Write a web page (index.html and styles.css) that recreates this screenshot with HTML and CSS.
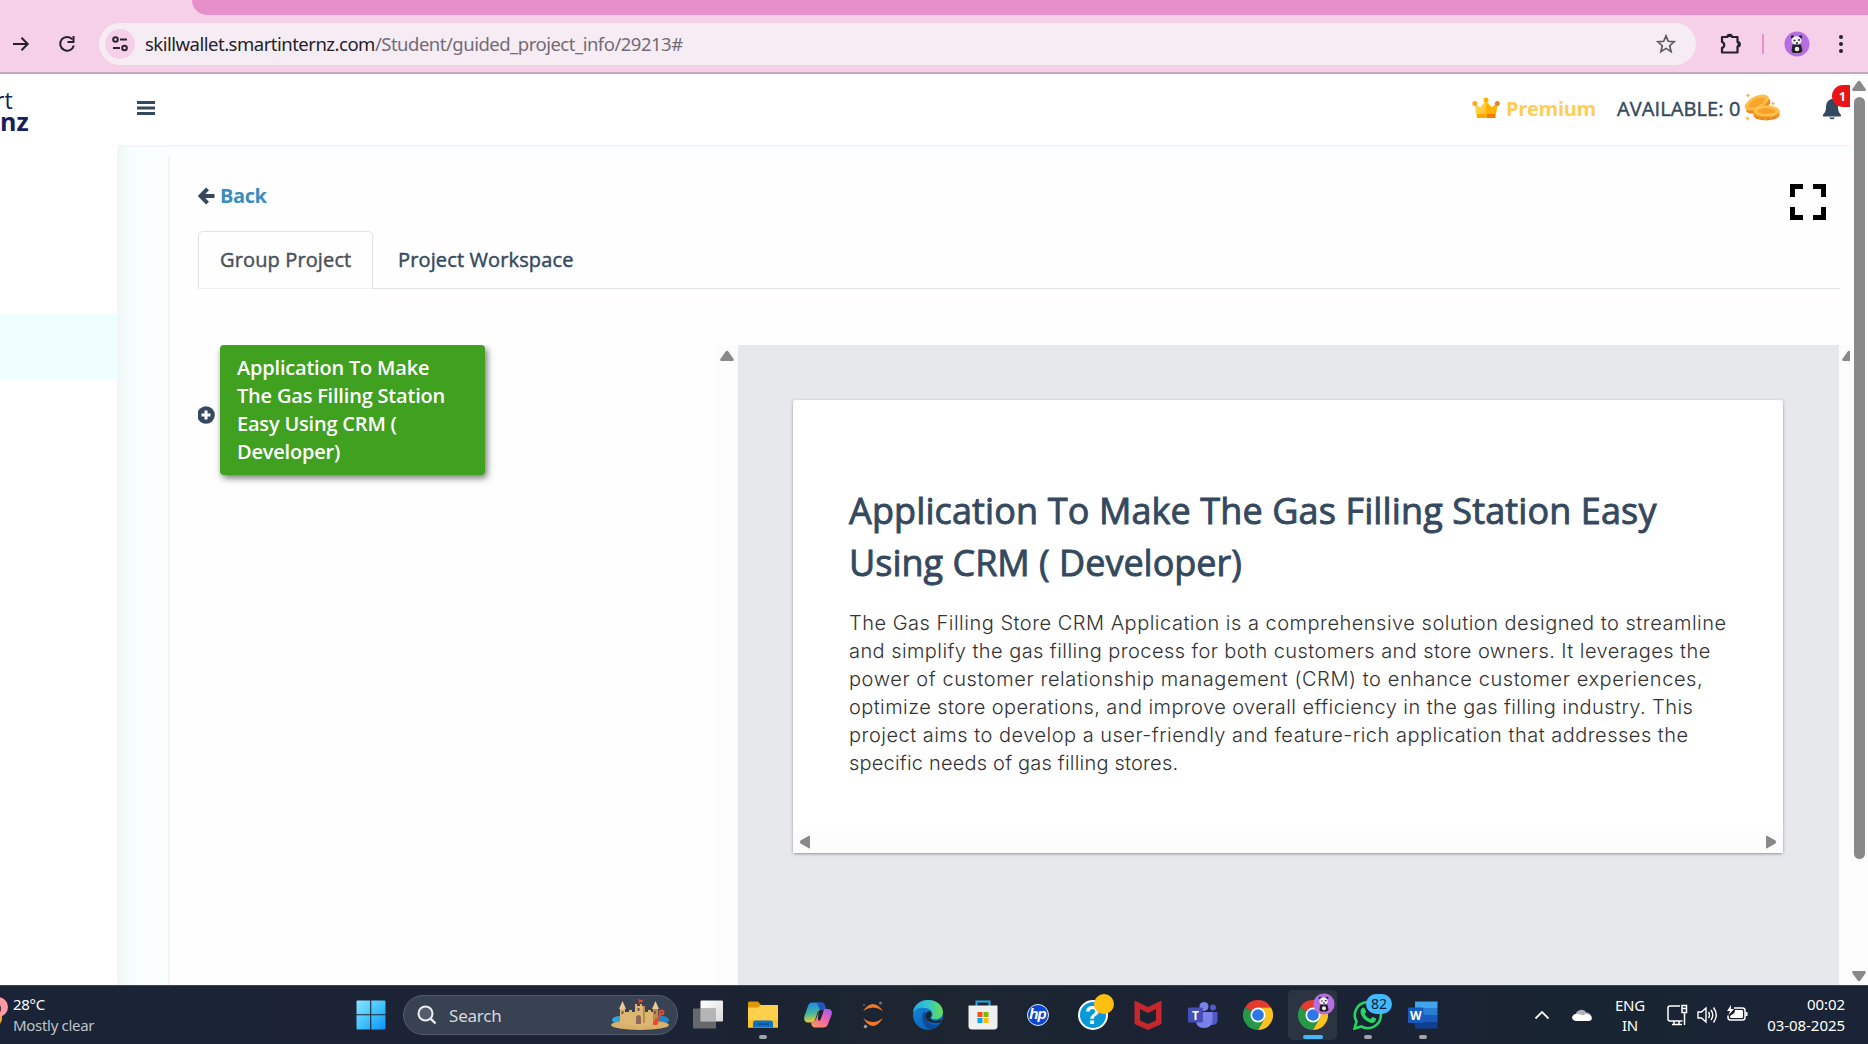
FILE: index.html
```html
<!DOCTYPE html>
<html lang="en">
<head>
<meta charset="utf-8">
<title>SkillWallet - Guided Project</title>
<link rel="stylesheet" href="styles.css">
</head>
<body>
<div class="screen">
  <header class="browser">
    <div class="tabstrip"><div class="tabstrip-fill"></div></div>
    <div class="toolbar">
      <svg class="nav-forward" width="18" height="18" viewBox="0 0 18 18"><path d="M1 9H15M9.5 2.8L15.7 9L9.500 15.200" fill="none" stroke="#25212a" stroke-width="2"/></svg>
      <svg class="nav-reload" width="18" height="18" viewBox="0 0 18 18"><path d="M14.500 4.500A6.900 6.900 0 1 0 15.800 10.500" fill="none" stroke="#25212a" stroke-width="2"/><path d="M15.500 1V7H9.500" fill="none" stroke="#25212a" stroke-width="2"/></svg>
      <div class="omnibox">
        <div class="site-info"><svg width="18" height="18" viewBox="0 0 18 18"><g fill="none" stroke="#2b2430" stroke-width="2"><circle cx="4.500" cy="4.500" r="2.300"/><path d="M9 4.500H16M2 13H9"/><circle cx="13.500" cy="13" r="2.300"/></g></svg></div>
        <div class="url">skillwallet.smartinternz.com<span class="url-path">/Student/guided_project_info/29213#</span></div>
        <svg class="star" width="20" height="20" viewBox="0 0 20 20"><path d="M10 1.800L12.300 7.300L18.200 7.800L13.700 11.700L15.100 17.600L10 14.400L4.900 17.600L6.300 11.700L1.800 7.800L7.700 7.300Z" fill="none" stroke="#5e5a62" stroke-width="1.700"/></svg>
      </div>
      <svg class="extensions" width="22" height="22" viewBox="0 0 22 22"><path d="M2 4H7.500A2.200 2.200 0 0 1 11.900 4H17.500V9A2.300 2.300 0 0 1 17.500 13.600V19.500H2V14.800A3 3 0 0 0 2 9Z" fill="none" stroke="#25212a" stroke-width="2.200" stroke-linejoin="round"/><path d="M7.500 4a2.200 2.200 0 0 1 4.400 0zM17.500 9a2.300 2.300 0 0 1 0 4.600z" fill="#25212a"/></svg>
      <div class="toolbar-rule"></div>
      <svg class="avatar" width="26" height="26" viewBox="0 0 26 26"><use href="#panda"/></svg>
      <svg class="kebab" width="6" height="20" viewBox="0 0 6 20"><g fill="#25212a"><circle cx="3" cy="3" r="2"/><circle cx="3" cy="10" r="2"/><circle cx="3" cy="17" r="2"/></g></svg>
    </div>
  </header>

  <div class="page">
    <aside class="sidebar">
      <div class="logo"><span class="logo-top">rt</span><span class="logo-bottom">nz</span></div>
      <div class="menu-active"></div>
    </aside>
    <div class="main">
      <div class="topbar">
        <svg class="burger" width="18" height="14" viewBox="0 0 18 14"><path d="M0 1.500H18M0 7H18M0 12.500H18" stroke="#34495e" stroke-width="3"/></svg>
        <svg class="crown" width="28" height="22" viewBox="0 0 28 22"><defs><linearGradient id="gold" x2="1" y2="1"><stop offset="0" stop-color="#ffe06a"/><stop offset="1" stop-color="#ffb300"/></linearGradient></defs><path d="M2.500 7L8.500 10L14 3L19.500 10L25.500 7L23 21H5Z" fill="url(#gold)"/><path d="M14 5L19.500 10.500L25.500 7L24 17H14Z" fill="#ffb000"/><path d="M5 17H23.300V21H5Z" fill="#ffa800"/><path d="M15 17H23.300V21H15Z" fill="#f57c00"/><circle cx="14" cy="3" r="2.500" fill="#ffb300"/><circle cx="2.800" cy="6.500" r="2.500" fill="#ffa726"/><circle cx="25.300" cy="6.500" r="2.500" fill="#ef7d22"/></svg>
        <span class="premium">Premium</span>
        <span class="available">AVAILABLE: 0</span>
        <svg class="coins" width="36" height="28" viewBox="0 0 36 28"><g transform="rotate(-25 13 10)"><ellipse cx="13" cy="13" rx="13" ry="6.300" fill="#e88b24"/><ellipse cx="13" cy="9.500" rx="13" ry="6.300" fill="#ffbd45"/><ellipse cx="13" cy="9.500" rx="9" ry="3.500" fill="#f8a52d"/></g><path d="M9.500 18V22.500C11 29 33 29 35.500 22.500V17.500Z" fill="#f09325"/><ellipse cx="22.500" cy="18" rx="13" ry="5.500" fill="#ffc34c"/><ellipse cx="22.500" cy="18" rx="9" ry="3" fill="#f8a12c"/><path d="M13 24v2M18 25v2M24 25v2M30 24v2" stroke="#c96d20"/><path d="M4 0l.8 1.700 1.700.8-1.700.8L4 5l-.8-1.700L1.500 2.500l1.700-.8zM3.500 23l.8 1.700 1.700.8-1.700.8-.8 1.700-.8-1.700L1 25.500l1.700-.8zM29 8l.8 1.700 1.700.8-1.700.8L29 13l-.8-1.700-1.700-.8 1.700-.8z" fill="#ffb84b"/></svg>
        <div class="bell">
          <svg width="20" height="22" viewBox="0 0 20 22"><path d="M10 1C6 1.500 4 5 4 9C4 13.500 2.500 15 .8 17Q.5 18.500 2 18.500H18Q19.500 18.500 19 17C17.500 15 16 13.500 16 9C16 5 14 1.500 10 1ZM7.200 19.500a2.900 2.500 0 0 0 5.600 0z" fill="#34495e"/></svg>
          <span class="badge">1</span>
        </div>
      </div>
      <div class="workspace">
        <section class="panel">
          <div class="panel-head">
            <div class="back"><svg width="17" height="18" viewBox="0 0 17 18"><path d="M9.500 1.800L2.500 9L9.500 16.200M3 9H16.500" fill="none" stroke="#34495e" stroke-width="4"/></svg><a class="back-link">Back</a></div>
            <svg class="fullscreen" width="36" height="36" viewBox="0 0 36 36"><path d="M2.500 13V2.500H13M23 2.500H33.500V13M33.500 23V33.500H23M13 33.500H2.500V23" fill="none" stroke="#000" stroke-width="5"/></svg>
          </div>
          <nav class="tabs"><div class="tab tab-on"><span>Group Project</span></div><div class="tab"><span>Project Workspace</span></div></nav>
          <div class="columns">
            <div class="tree">
              <svg class="plus" width="18" height="18" viewBox="0 0 18 18"><circle cx="9" cy="9" r="8.800" fill="#34495e"/><path d="M9 4.500V13.500M4.500 9H13.500" stroke="#fff" stroke-width="3"/></svg>
              <div class="node">Application To Make<br>The Gas Filling Station<br>Easy Using CRM (<br>Developer)</div>
            </div>
            <div class="tree-scroll"><svg width="14" height="12" viewBox="0 0 14 12"><use href="#tri"/></svg></div>
            <div class="stage">
              <article class="card">
                <div class="card-body">
                  <h1>Application To Make The Gas Filling Station Easy<br><span class="title-end">Using CRM ( Developer)</span></h1>
                  <p><span class="l1">The Gas Filling Store CRM Application is a comprehensive solution designed to streamline</span><br><span class="l2">and simplify the gas filling process for both customers and store owners. It leverages the</span><br><span class="l3">power of customer relationship management (CRM) to enhance customer experiences,</span><br><span class="l4">optimize store operations, and improve overall efficiency in the gas filling industry. This</span><br><span class="l5">project aims to develop a user-friendly and feature-rich application that addresses the</span><br><span class="l6">specific needs of gas filling stores.</span></p>
                </div>
                <div class="card-scroll"><svg width="12" height="14" viewBox="0 0 12 14"><path d="M11 1V13Q11 14 9.500 13L1.500 8.500Q0 7 1.500 5.500L9.500 1Q11 0 11 1Z" fill="#898989"/></svg><svg width="12" height="14" viewBox="0 0 12 14"><path d="M1 1V13Q1 14 2.500 13L10.500 8.500Q12 7 10.500 5.500L2.500 1Q1 0 1 1Z" fill="#898989"/></svg></div>
              </article>
            </div>
            <div class="stage-scroll"><svg width="14" height="12" viewBox="0 0 14 12"><use href="#tri"/></svg></div>
          </div>
        </section>
      </div>
    </div>
    <div class="page-scroll">
      <svg width="14" height="12" viewBox="0 0 14 12"><use href="#tri"/></svg>
      <div class="thumb"></div>
      <svg class="down" width="14" height="12" viewBox="0 0 14 12"><use href="#tri"/></svg>
    </div>
  </div>

  <footer class="taskbar">
    <div class="weather"><svg class="weather-icon" width="9" height="34" viewBox="0 0 9 34"><path d="M0 16H2V24L0 28Z" fill="#f5a623"/><circle cx="-2" cy="11" r="10" fill="#ff99a4"/><path d="M0 9L1 11V15L0 16Z" fill="#57363c"/></svg><div class="weather-text"><span>28°C</span><span class="muted">Mostly clear</span></div></div>
    <svg class="windows" width="30" height="30" viewBox="0 0 30 30"><defs><linearGradient id="win" x2="1" y2="1"><stop offset="0" stop-color="#8be3ff"/><stop offset=".5" stop-color="#43c4fb"/><stop offset="1" stop-color="#0c8fff"/></linearGradient></defs><path d="M.5 1.500Q.5.500 1.500.500H14.200V14.200H.500ZM15.300.500H28.500Q29.500.500 29.500 1.500V14.200H15.300ZM.5 15.300H14.200V29.500H1.500Q.5 29.500.5 28.500ZM15.300 15.300H29.500V28.500Q29.500 29.500 28.500 29.500H15.300Z" fill="url(#win)"/></svg>
    <div class="search">
      <svg width="20" height="20" viewBox="0 0 20 20"><circle cx="8.500" cy="8.500" r="7" fill="#545d6c" stroke="#eceef1" stroke-width="2"/><path d="M13.600 13.600L18.500 18.500" stroke="#eceef1" stroke-width="2.400"/></svg>
      <span class="search-label">Search</span>
      <svg class="castle" width="60" height="32" viewBox="0 0 60 32"><ellipse cx="10" cy="21" rx="8" ry="4" fill="#2ba7dc"/><ellipse cx="52" cy="21" rx="7" ry="4" fill="#2385c5"/><ellipse cx="30" cy="26" rx="29" ry="5" fill="#d8b06c"/><path d="M10 10H15V13H19V11H22V13H25V5H27V7H30V5H32V7H35V13H38V11H41V13H43V10H48V25Q30 29 10 25Z" fill="#dcb673"/><path d="M9 10L12.500 2L16 10ZM42 10L45.500 2L49 10Z" fill="#e9cb92"/><path d="M43 10H48V25H43ZM33 7H35V24H33Z" fill="#b98c4e"/><path d="M26 25V18Q28.500 14 31 18V25Z" fill="#8c6757"/><path d="M28.500 9V12M12.500 12V15M45 12V15" stroke="#745a54" stroke-width="2"/><path d="M29 6V0" stroke="#a33"/><path d="M29 0L34 2L29 4Z" fill="#ef4936"/><path d="M46 23L51 14" stroke="#e54a35" stroke-width="2"/><circle cx="51.500" cy="13.500" r="2" fill="none" stroke="#e54a35" stroke-width="2"/><path d="M43 23L46 19L49 22L47 26H43Z" fill="#e54a35"/></svg>
    </div>
    <div class="apps">
      <div class="app"><svg width="30" height="30" viewBox="0 0 30 30"><defs><linearGradient id="tv" x2="1" y2="1"><stop stop-color="#fff"/><stop offset="1" stop-color="#d9d9db"/></linearGradient></defs><rect x="7.500" y=".5" width="22.500" height="21" rx="1" fill="url(#tv)"/><rect y="8.500" width="23" height="20" rx="1" fill="#777" opacity=".82"/><path d="M7.500 8.500H23V21.500H7.500Z" fill="#b4b5b6"/></svg></div>
      <div class="app"><svg width="30" height="30" viewBox="0 0 30 30"><path d="M0 3Q0 1.500 1.500 1.500H10L13 5H20V12H0Z" fill="#dc9900"/><path d="M0 7.500H10L13 5H30V27.500H0Z" fill="#ffd04b"/><path d="M0 20H30V27.500H0Z" fill="#fcc22f"/><path d="M5 27.500V23Q5 20.500 7.500 20.500H22.500Q25 20.500 25 23V27.500Z" fill="#0b73c6"/><path d="M9 24H21" stroke="#063f75" stroke-width="1.200"/></svg><i class="run"></i></div>
      <div class="app"><svg width="30" height="30" viewBox="0 0 30 30"><defs><linearGradient id="cpa" x2=".2" y2="1"><stop offset=".1" stop-color="#1d8ae8"/><stop offset=".6" stop-color="#48b69b"/><stop offset="1" stop-color="#f4cb2e"/></linearGradient><linearGradient id="cpb" x1=".8" x2=".2" y2="1"><stop stop-color="#a659eb"/><stop offset=".5" stop-color="#f265aa"/><stop offset="1" stop-color="#ff935b"/></linearGradient></defs><path d="M9 2.500H18Q21 2.500 22 6L23 10H18Q15 10 14 14L12 20Q11 22.500 8 22.500H5Q0 22 1.500 16L5 6Q6 2.500 9 2.500Z" fill="url(#cpa)"/><path d="M14 2.500H18Q21 2.500 22 6L23 10H17Z" fill="#2453c8"/><path d="M21 9H25Q30 9 28.500 15L25 24Q24 27.500 20 27.500H12Q9 27.500 8 23L10 22Q12 22 13 19L16 11Q14 20 16 21Q18 21 21 9Z" fill="url(#cpb)"/></svg></div>
      <div class="app"><svg width="30" height="30" viewBox="0 0 30 30"><path d="M5 11Q15-3 25 11Q15 4 5 11ZM5 18Q15 34 25 18Q15 26 5 18Z" fill="#f37726"/><circle cx="22.500" cy="3" r="1.500" fill="#777"/><circle cx="6" cy="5" r="1" fill="#666"/><circle cx="7.500" cy="26.500" r="1.800" fill="#999"/></svg></div>
      <div class="app"><svg width="30" height="30" viewBox="0 0 30 30"><defs><linearGradient id="edge"><stop stop-color="#27a9e3"/><stop offset=".5" stop-color="#35c5cc"/><stop offset="1" stop-color="#67df4c"/></linearGradient><linearGradient id="edgeb" x2=".6" y2="1"><stop stop-color="#168cda"/><stop offset="1" stop-color="#0862b8"/></linearGradient></defs><circle cx="15" cy="15" r="15" fill="url(#edgeb)"/><path d="M0 13C1-4 29-4 30 12C30 19 22 21 18 18C22 13 17 8 12 8C6 7 2 9 0 13Z" fill="url(#edge)"/><path d="M12 11C8 14 8 23 14 28Q20 32 27 24C22 27 14 24 13 16Z" fill="#104a94"/><path d="M17 11C20 14 18 16 17 18C19 22 25 21 28.500 19.500L27.500 22.500C20 24 12 22 12.500 15Q13 11.500 17 11Z" fill="#1a2533"/></svg></div>
      <div class="app"><svg width="30" height="30" viewBox="0 0 30 30"><path d="M8.500 6V1.500H21.500V6" fill="none" stroke="#24a9e5" stroke-width="2"/><path d="M.5 5.500H29.500V26Q29.500 29.500 26 29.500H4Q.5 29.500 .5 26Z" fill="#f0f0f1"/><path d="M9.500 12H14.500V17H9.500Z" fill="#f25022"/><path d="M15.500 12H20.500V17H15.500Z" fill="#7fba00"/><path d="M9.500 18H14.500V23H9.500Z" fill="#00a4ef"/><path d="M15.500 18H20.500V23H15.500Z" fill="#ffb900"/></svg></div>
      <div class="app"><div class="hp">hp</div></div>
      <div class="app"><div class="help">?</div><i class="help-dot"></i></div>
      <div class="app"><svg width="30" height="30" viewBox="0 0 30 30"><path d="M1.500.500L15 7L28.500.500V24L15 30L1.500 24ZM7 9V20.500L15 24L23 20.500V9L15 13Z" fill="#c5272d" fill-rule="evenodd"/></svg></div>
      <div class="app"><svg width="30" height="30" viewBox="0 0 30 30"><circle cx="16" cy="6.500" r="4.500" fill="#7b83eb"/><circle cx="25" cy="7.500" r="3" fill="#5059c9"/><path d="M20 12H29.500V20Q29.500 25 24 25H20Z" fill="#5059c9"/><path d="M8 12H24.500V20Q24 28 16 28T8 20Z" fill="#7b83eb"/><rect y="7.500" width="15" height="15" rx="1.500" fill="#464eb8"/><text class="office-letter" x="7.500" y="19.500" font-size="12">T</text></svg></div>
      <div class="app"><svg width="30" height="30" viewBox="0 0 30 30"><use href="#chrome"/></svg></div>
      <div class="app app-on"><svg width="30" height="30" viewBox="0 0 30 30"><use href="#chrome"/></svg><svg class="mini-avatar" width="22" height="22" viewBox="0 0 26 26"><use href="#panda"/></svg><i class="run"></i></div>
      <div class="app"><svg width="30" height="30" viewBox="0 0 30 30"><path d="M1.500 28.500L3.500 21.500A13 13 0 1 1 8.500 26.500Z" fill="#18242f" stroke="#25d366" stroke-width="2.600"/><path d="M9 8Q11 6.500 12 9L13 11.500Q13 13 11.500 14Q14 18 17.500 19L19.500 17Q23.500 18 23 19.500Q22 23 19 23C13 22 8 17 7.500 12Q7.500 9.500 9 8Z" fill="#25d366"/></svg><b class="count">82</b><i class="run"></i></div>
      <div class="app"><svg width="30" height="30" viewBox="0 0 30 30"><path d="M7 1.500H29.500V8H7Z" fill="#41a5ee"/><path d="M7 8H29.500V15H7Z" fill="#2b7cd3"/><path d="M7 15H29.500V22H7Z" fill="#185abd"/><path d="M7 22H29.500V28.500H7Z" fill="#103f91"/><rect x="0" y="7.500" width="15.500" height="15.500" rx="1.300" fill="#185abd"/><text class="office-letter" x="7.700" y="19.700" font-size="12">W</text></svg><i class="run"></i></div>
    </div>
    <div class="tray">
      <svg width="16" height="10" viewBox="0 0 16 10"><path d="M1.500 8.500L8 2L14.500 8.500" fill="none" stroke="#fff" stroke-width="1.800"/></svg>
      <svg class="cloud" width="20" height="14" viewBox="0 0 20 14"><path d="M3.500 7A6 6 0 0 1 14.500 4.500A5 5 0 0 1 19.500 10H3Z" fill="#aeb3bc"/><path d="M0 9Q2 4.500 7 6L11 7.500Q15 4.500 19 8Q21.500 12.500 17 13H4Q0 12.500 0 9Z" fill="#fff"/></svg>
      <div class="lang"><span>ENG</span><span>IN</span></div>
      <svg class="net" width="21" height="22" viewBox="0 0 21 22"><g fill="none" stroke="#fff" stroke-width="1.500"><path d="M13 2H3Q1 2 1 4V15Q1 17 3 17H15.500M7 17V20M12 17V20M5 20.500H15"/><rect x="15" y="1.500" width="4.500" height="7"/><path d="M17.500 9V21M15 4.500H20"/></g></svg>
      <svg class="vol" width="21" height="18" viewBox="0 0 21 18"><g fill="none" stroke="#fff" stroke-width="1.400"><path d="M1 6V12H4.500L9 16V2L4.500 6Z"/><path d="M11.500 6Q13.500 9 11.500 12M14 4Q17.500 9 14 14M16.500 1.500Q22 9 16.500 16.500"/></g></svg>
      <svg class="bat" width="21" height="18" viewBox="0 0 21 18"><path d="M7 3H15.500Q18 3 18 5.500V12.500Q18 15 15.500 15H3.500Q1 15 1 12.500V10.500" fill="none" stroke="#fff" stroke-width="1.500"/><path d="M8 5H15Q16 5 16 6.500V11.500Q16 13 15 13H4Q3 13 3 11L7.500 8ZM18.500 7H20.500V11H18.500ZM4 0L0 6H3L1.500 10L7 4H4Z" fill="#fff"/></svg>
      <div class="clock"><span class="time">00:02</span><span class="date">03-08-2025</span></div>
    </div>
  </footer>
</div>

<svg class="symbols" width="0" height="0">
  <symbol id="tri" viewBox="0 0 14 12"><path d="M1 11Q-.5 10.500.7 8.500L5.500 1.800Q7-.2 8.500 1.800L13.300 8.500Q14.500 10.500 13 11Z" fill="#898989"/></symbol>
  <symbol id="panda" viewBox="0 0 26 26"><circle cx="13" cy="13" r="12.500" fill="#b56ee0"/><circle cx="8.500" cy="6" r="1.700" fill="#222"/><circle cx="16.500" cy="6" r="1.700" fill="#222"/><ellipse cx="12.500" cy="9.500" rx="5" ry="4.300" fill="#f2f0f2"/><path d="M8.500 13.500H17L18.500 20L16 22H9L7.500 20Z" fill="#222"/><ellipse cx="13" cy="18" rx="2.300" ry="2.300" fill="#eee"/><path d="M9.500 9.500H11.500M14 9H16M12 12H14" stroke="#222" stroke-width="1.300"/></symbol>
  <symbol id="chrome" viewBox="0 0 30 30"><path d="M15 15L2 7.500A15 15 0 0 1 28 7.500H15Z" fill="#e33b2e"/><path d="M15 15L2 7.500A15 15 0 0 0 15 30L21.500 18.800Z" fill="#27984a"/><path d="M15 7.500H28A15 15 0 0 1 15 30L21.500 18.800Z" fill="#fcc31e"/><circle cx="15" cy="15" r="7.500" fill="#fff"/><circle cx="15" cy="15" r="5.800" fill="#2b76e8"/></symbol>
</svg>
</body>
</html>
```
FILE: styles.css
```css
* { box-sizing: border-box; }
body { margin: 0; font-family: "Open Sans", "Noto Sans", sans-serif; overflow: hidden; }
svg { display: block; flex: none; }
.symbols { position: absolute; }
.screen { width: 1868px; height: 1044px; display: grid; grid-template-rows: 74px 911px 59px; overflow: hidden; background: #fff; }

/* browser chrome */
.browser { background: #f5d0e8; border-bottom: 2px solid #c4a8bd; }
.tabstrip { height: 15px; padding-left: 192px; background: linear-gradient(90deg, #f5d0e8 50%, #e78fca 50%); }
.tabstrip-fill { height: 15px; background: #e78fca; border-bottom-left-radius: 15px; }
.toolbar { height: 57px; display: flex; align-items: center; padding: 0 0 0 12px; background: #f5d0e8; border-top-right-radius: 12px; }
.nav-reload { margin-left: 28px; }
.omnibox { width: 1597px; height: 42px; margin-left: 23px; border-radius: 21px; background: #f5edf3; display: flex; align-items: center; padding-left: 6px; }
.site-info { width: 30px; height: 30px; border-radius: 15px; background: #f5d0e8; display: grid; place-items: center; }
.url { margin-left: 10px; font: 18.500px "Noto Sans", sans-serif; letter-spacing: -.5px; color: #25212a; white-space: nowrap; }
.url-path { color: #746b75; }
.star { margin: 0 20px 0 auto; }
.extensions { margin-left: 24px; }
.toolbar-rule { width: 2px; height: 20px; margin-left: 20px; background: #e78fca; }
.avatar { margin-left: 20px; }
.kebab { margin-left: 28px; }

/* site frame */
.page { display: grid; grid-template-columns: 117px 1733px 18px; min-height: 0; overflow: hidden; }
.sidebar { overflow: hidden; }
.logo { height: 240px; display: flex; flex-direction: column; align-items: flex-start; padding-top: 16px; color: #16215b; line-height: 21px; }
.logo-top { font-size: 23px; margin-left: -5px; }
.logo-bottom { font-size: 25px; font-weight: 700; }
.menu-active { height: 65px; background: #effeff; }
.main { display: grid; grid-template-rows: 71px 840px; min-width: 0; }
.topbar { display: flex; align-items: center; padding: 0 0 2px 20px; color: #34495e; font-size: 20px; font-weight: 400; }
.burger { margin: -2px auto 0 0; }
.crown { margin: -2px 6px 0 0; }
.premium { width: 90px; color: #ffcd55; font-weight: 700; white-space: nowrap; letter-spacing: -.3px; }
.available { width: 124px; margin-left: 21px; white-space: nowrap; letter-spacing: .1px; -webkit-text-stroke: .45px #34495e; }
.coins { margin: -3px 0 0 3px; }
.bell { position: relative; width: 28px; height: 44px; margin-left: 42px; padding-top: 11px; }
.badge { position: absolute; left: 10px; top: -2px; width: 18px; height: 22px; padding-left: 7px; border-radius: 11px 0 0 11px; background: #e81417; color: #fff; font-size: 12px; font-weight: 700; line-height: 23px; }
.workspace { padding: 9px 0 0 51px; background: linear-gradient(90deg, #f0f5f7 0, #f8fdfe 14px, #fafeff 50px); border-top: 2px solid #f2f6f8; }
.panel { height: 829px; padding-left: 28px; background: #fefefe; border-left: 2px solid #f0f4f6; }
.panel-head { height: 75px; display: flex; justify-content: space-between; padding: 28px 24px 0 0; }
.back { display: flex; height: 22px; align-items: center; gap: 5px; }
.back svg { margin-top: 2px; }
.back-link { color: #3c8dbc; font-size: 20px; font-weight: 700; letter-spacing: -.4px; }
.tabs { display: flex; width: 1642px; height: 58px; border-bottom: 1px solid #dee2e6; color: #34495e; font-size: 20px; letter-spacing: .13px; -webkit-text-stroke: .45px currentColor; }
.tab { height: 58px; padding: 0 24px; line-height: 56px; white-space: nowrap; border: 1px solid transparent; }
.tab-on { width: 175px; padding: 0 21px; color: #495057; background: #fefefe; border-color: #dee2e6 #dee2e6 #f0f0f0; border-radius: 5px 5px 0 0; }

/* project tree and detail stage */
.columns { display: grid; grid-template-columns: 517px 23px 1101px 11px; height: 640px; margin-top: 56px; overflow: hidden; }
.tree { display: flex; align-items: flex-start; overflow: hidden; margin-left: -1px; padding-left: 1px; }
.plus { margin: 61px 5px 0 -1px; }
.node { width: 265px; height: 130px; padding: 9px 17px; border-radius: 4px; background: #40a020; color: #fff; font-size: 20px; font-weight: 600; line-height: 28px; letter-spacing: -.2px; white-space: nowrap; box-shadow: 2px 3px 7px rgba(0,0,0,.55); }
.tree-scroll { padding: 5px 0 0 5px; background: #fcfcfc; }
.stage { padding: 55px 56px 0 55px; background: #e7e8ec; }
.stage-scroll { padding: 5px 0 0 3px; overflow: hidden; background: #fcfcfc; }
.card { width: 990px; height: 453px; display: grid; grid-template-rows: 431px 22px; border-radius: 3px; background: #fff; box-shadow: 0 1px 3px rgba(50,60,65,.5); }
.card-body { padding: 85px 56px 0; }
h1 { margin: 0; color: #34495e; font-size: 36px; font-weight: 400; line-height: 52px; letter-spacing: .12px; white-space: nowrap; -webkit-text-stroke: .9px #34495e; }
.title-end { letter-spacing: 0; }
p { margin: 20px 0 0; color: #333; font: 300 20px/28px Inter, sans-serif; white-space: nowrap; }
.l1 { letter-spacing: .5px; }
.l2 { letter-spacing: .43px; }
.l3 { letter-spacing: .58px; }
.l4 { letter-spacing: .42px; }
.l5 { letter-spacing: .49px; }
.l6 { letter-spacing: .2px; }
.card-scroll { display: flex; justify-content: space-between; align-items: center; padding: 0 6px; background: #fcfcfc; }
.page-scroll { display: flex; flex-direction: column; align-items: center; padding-top: 6px; background: #fcfcfc; }
.thumb { width: 11px; height: 762px; margin-top: 5px; border-radius: 6px; background: #898989; }
.down { margin-top: auto; margin-bottom: 3px; transform: rotate(180deg); }

/* desktop taskbar */
.taskbar { display: flex; align-items: center; background: linear-gradient(90deg, #1b2437, #1b2334 38%, #1c252f 50%, #1b2335 65%, #192432 85%, #1b2437); border-top: 1px solid #3a434e; color: #fff; font: 15px/21px "Noto Sans", sans-serif; }
.weather { width: 356px; display: flex; align-items: center; }
.weather-icon { margin-bottom: 4px; }
.weather-text { display: grid; margin: -1px 0 0 4px; letter-spacing: -.3px; line-height: 20.500px; }
.muted { color: #bfc3ca; }
.search { width: 275px; height: 40px; margin-left: 17px; padding: 0 7px 0 13px; display: flex; align-items: center; border: 1px solid #525c6b; border-radius: 20px; background: #394252; }
.search-label { margin-left: 12px; font-size: 17px; color: #d5d8dd; letter-spacing: -.2px; }
.castle { margin-left: auto; }
.apps { display: flex; margin-left: 2px; }
.app { position: relative; width: 55px; height: 58px; display: grid; place-items: center; }
.run { position: absolute; left: 24px; bottom: 5px; width: 8px; height: 4px; border-radius: 2px; background: #a0a4aa; }
.app-on { width: 49px; height: 50px; margin: 4px 3px; border-radius: 5px; background: #2b3442; }
.app-on .run { left: 15px; bottom: 1px; width: 20px; background: #43b9f7; }
.mini-avatar { position: absolute; left: 25px; top: 3px; }
.hp { width: 22px; height: 22px; border-radius: 50%; background: #0c47d4; border: 1px solid #dce7ff; text-align: center; font: italic 700 15px/17px "Liberation Sans", sans-serif; letter-spacing: -1px; }
.help { width: 30px; height: 30px; border: 2px solid #fff; border-radius: 50%; background: #0798d9; text-align: center; font: 700 25px/26px "Liberation Sans", sans-serif; }
.help-dot { position: absolute; left: 29px; top: 8px; width: 20px; height: 20px; border-radius: 50%; background: #ffbf0f; }
.office-letter { fill: #fff; text-anchor: middle; font-family: "Open Sans", sans-serif; font-weight: 700; }
.count { position: absolute; left: 26px; top: 8px; width: 26px; height: 20px; border-radius: 10px; background: #43b9ff; color: #10202c; text-align: center; font: 14px/20px "Noto Sans", sans-serif; }
.tray { display: flex; align-items: center; margin-left: 84px; }
.cloud { margin-left: 22px; }
.lang { width: 32px; display: grid; margin-left: 22px; text-align: center; letter-spacing: -.2px; line-height: 20.500px; }
.net { margin-left: 21px; }
.vol { margin-left: 9px; }
.bat { margin-left: 9px; margin-top: -2px; }
.clock { width: 80px; display: grid; margin-left: 17px; margin-top: -1px; text-align: right; white-space: nowrap; justify-items: end; letter-spacing: -.05px; line-height: 20.500px; }
```
